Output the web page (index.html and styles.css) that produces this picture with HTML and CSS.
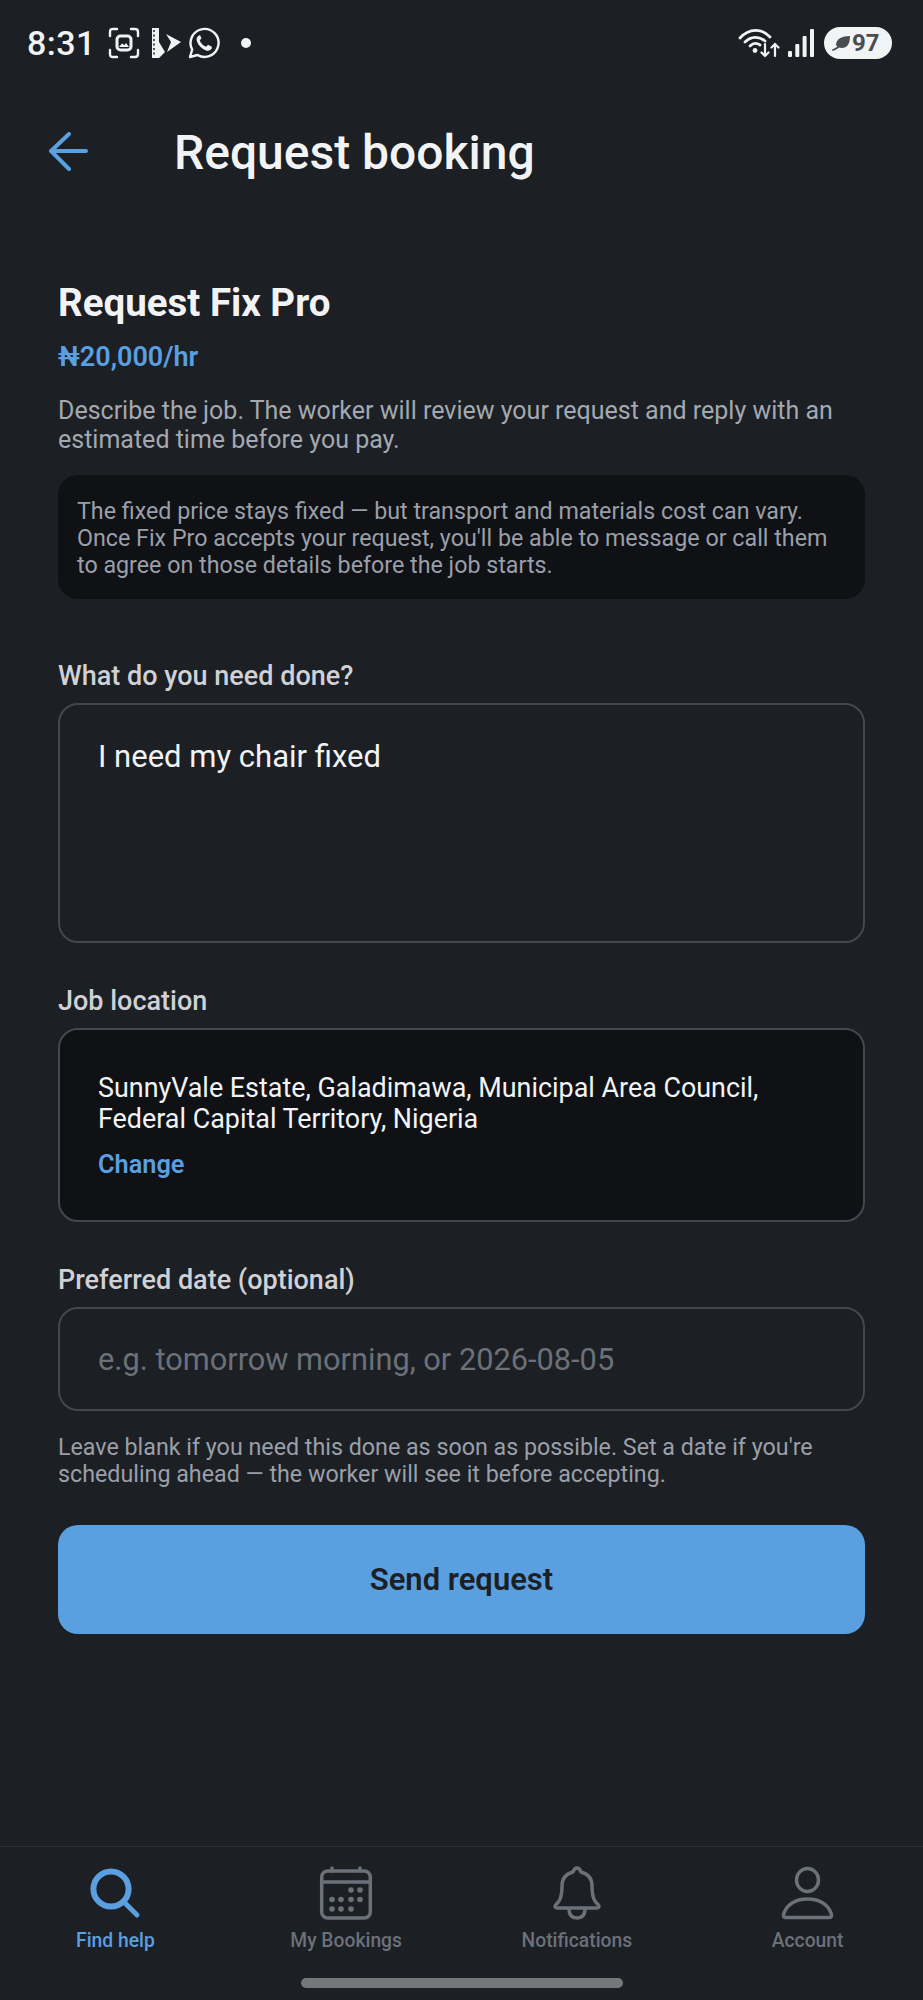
FILE: index.html
```html
<!doctype html>
<html lang="en">
<head>
	<meta charset="utf-8">
	<meta name="viewport" content="width=device-width, initial-scale=1.0">
	<title>Request booking</title>
	<link rel="stylesheet" href="styles.css">
</head>
<body>
<div class="screen">

	<div class="statusbar">
		<div class="status-left">
			<span class="clock">8:31</span>
			<svg class="st-shot" width="32" height="32" viewBox="0 0 32 32" fill="none" stroke="#f2f3f5" stroke-width="2.400" stroke-linecap="round">
				<path d="M2 9V5q0-3 3-3h4M23 2h4q3 0 3 3v4M30 23v4q0 3-3 3h-4M9 30H5q-3 0-3-3v-4"/>
				<rect x="9" y="9" width="14" height="14" rx="3.500" stroke-width="3"/>
				<path d="M11 20l3-3.500 2.500 1.500 1.500-2 3 4z" fill="#f2f3f5" stroke="none"/>
			</svg>
			<svg class="st-app" width="30" height="32" viewBox="0 0 30 32">
				<path d="M1 1h7v14l6 10-6 6H1z" fill="#f2f3f5"/>
				<path d="M3 3v26" stroke="#1c1f24" stroke-width="1.500" stroke-dasharray="2 2.500"/>
				<path d="M15 7l15 8-14 10 4-10z" fill="#f2f3f5"/>
			</svg>
			<svg class="st-wa" width="32" height="32" viewBox="0 0 32 32" fill="none">
				<path d="M2 30l2.200-7.500A14 14 0 1 1 9.500 28z" stroke="#f2f3f5" stroke-width="2.400" stroke-linejoin="round"/>
				<path d="M11 8.500c-2 1-3 3-2 6 1.500 4 5 7.500 9 9 3 .8 5-.5 6-2.500l-.5-1.500-3.500-1.700-1.800 2c-3-1-5.500-3.500-6.500-6.500l1.800-1.800-1.500-3.500z" fill="#f2f3f5"/>
			</svg>
			<span class="st-dot"></span>
		</div>
		<div class="status-right">
			<svg class="st-wifi" width="42" height="30" viewBox="0 0 42 30" fill="none" stroke="#f2f3f5" stroke-width="2.800" stroke-linecap="round">
				<path d="M2 10C11 0 24 0 32 9"/>
				<path d="M7 14c6-6 14-6 20-1"/>
				<path d="M12 18c3-3 7-3 10-1"/>
				<circle cx="17" cy="22.500" r="2.400" fill="#f2f3f5" stroke="none"/>
				<path d="M27 16v12M23.500 24.500l3.500 3.500 3.500-3.500M37 28V16M33.500 19.500l3.500-3.500 3.500 3.500" stroke-width="2.200"/>
			</svg>
			<svg class="st-signal" width="26" height="28" viewBox="0 0 26 28" fill="#f2f3f5">
				<rect x="0" y="22" width="4" height="6" rx="1"/>
				<rect x="7.300" y="15" width="4" height="13" rx="1"/>
				<rect x="14.600" y="7" width="4" height="21" rx="1"/>
				<rect x="22" y="0" width="4" height="28" rx="1"/>
			</svg>
			<span class="battery">
				<svg width="18" height="15" viewBox="0 0 18 15" fill="#4a4c50">
					<path d="M4 9C4 3 10 0 18 0c0 8-3 12-8 12-2.500 0-5-1-6-3z"/>
					<path d="M1 14c3-1 6-3 8-6" stroke="#4a4c50" stroke-width="1.800" fill="none" stroke-linecap="round"/>
				</svg>
				<b>97</b>
			</span>
		</div>
	</div>

	<header class="topbar">
		<svg class="back" width="40" height="40" viewBox="0 0 40 40" fill="none" stroke="#5a9fe0" stroke-width="4" stroke-linecap="round" stroke-linejoin="round">
			<path d="M38 19H3M21 2L3 19l18 18"/>
		</svg>
		<h1>Request booking</h1>
	</header>

	<main class="content">
		<h2>Request Fix Pro</h2>
		<p class="price">₦20,000/hr</p>
		<p class="intro">Describe the job. The worker will review your request and reply with an estimated time before you pay.</p>

		<div class="note">The fixed price stays fixed — but transport and materials cost can vary. Once Fix Pro accepts your request, you'll be able to message or call them to agree on those details before the job starts.</div>

		<label class="label label-first">What do you need done?</label>
		<div class="field field-area">I need my chair fixed</div>

		<label class="label">Job location</label>
		<div class="field field-location">
			<p class="address">SunnyVale Estate, Galadimawa, Municipal Area Council, Federal Capital Territory, Nigeria</p>
			<span class="change">Change</span>
		</div>

		<label class="label">Preferred date (optional)</label>
		<div class="field field-date">e.g. tomorrow morning, or 2026-08-05</div>
		<p class="hint">Leave blank if you need this done as soon as possible. Set a date if you're scheduling ahead — the worker will see it before accepting.</p>

		<button class="send">Send request</button>
	</main>

	<nav class="tabbar">
		<div class="tab tab-on">
			<svg width="56" height="56" viewBox="0 0 56 56" fill="none" stroke="#5a9fe0" stroke-width="6" stroke-linecap="round">
				<circle cx="24" cy="23" r="17.600"/>
				<path d="M37 36l13 13" stroke-width="5"/>
			</svg>
			<span>Find help</span>
		</div>
		<div class="tab">
			<svg width="56" height="56" viewBox="0 0 56 56" fill="none" stroke="#6b7079" stroke-width="3.500" stroke-linecap="round">
				<rect x="3.700" y="5" width="48.600" height="47" rx="6"/>
				<path d="M3.700 16h48.600M14 2v3M42 2v3"/>
				<g fill="#6b7079" stroke="none">
					<circle cx="33" cy="24" r="2.800"/><circle cx="42" cy="24" r="2.800"/>
					<circle cx="14" cy="33.500" r="2.800"/><circle cx="23" cy="33.500" r="2.800"/><circle cx="33" cy="33.500" r="2.800"/><circle cx="42" cy="33.500" r="2.800"/>
					<circle cx="14" cy="43" r="2.800"/><circle cx="23" cy="43" r="2.800"/><circle cx="33" cy="43" r="2.800"/>
				</g>
			</svg>
			<span>My Bookings</span>
		</div>
		<div class="tab">
			<svg width="56" height="56" viewBox="0 0 56 56" fill="none" stroke="#6b7079" stroke-width="3.500" stroke-linecap="round" stroke-linejoin="round">
				<path d="M28 2c-2 0-3 1-4 4-8 2-11 8-11 14 0 8-1 12-3 15-2 3-4 4-4 5 0 2 1 2 3 2h38c2 0 3 0 3-2 0-1-2-2-4-5-2-3-3-7-3-15 0-6-3-12-11-14-1-3-2-4-4-4z"/>
				<path d="M20 43c0 6 3 9 8 9s8-3 8-9"/>
			</svg>
			<span>Notifications</span>
		</div>
		<div class="tab">
			<svg width="56" height="56" viewBox="0 0 56 56" fill="none" stroke="#6b7079" stroke-width="3.500" stroke-linecap="round" stroke-linejoin="round">
				<ellipse cx="27.500" cy="14" rx="11" ry="11.500"/>
				<path d="M6 51.500c-2 0-3-1-2.500-3C6 39 15 33 27.500 33S49 39 51.500 48.500c.5 2-.5 3-2.500 3z"/>
			</svg>
			<span>Account</span>
		</div>
	</nav>

	<div class="handle-row"><div class="handle"></div></div>
</div>
</body>
</html>
```

FILE: styles.css
```css
* {
	box-sizing: border-box;
}

body {
	margin: 0;
	background: #1c1f24;
	font-family: Roboto, "Noto Sans", sans-serif;
	color: #f2f3f5;
}

p, h1, h2 {
	margin: 0;
}

.screen {
	height: 2000px;
	display: flex;
	flex-direction: column;
}

/* status bar */
.statusbar {
	height: 86px;
	padding: 0 31px 0 27px;
	display: flex;
	justify-content: space-between;
	align-items: center;
}
.status-left, .status-right {
	display: flex;
	align-items: center;
}
.clock {
	font-size: 34px;
	font-weight: 500;
	letter-spacing: .5px;
	margin-right: 12px;
}
.st-app {
	margin-left: 11px;
}
.st-wa {
	margin-left: 7px;
}
.st-dot {
	width: 10px;
	height: 10px;
	border-radius: 50%;
	background: #f2f3f5;
	margin-left: 21px;
}
.st-signal {
	margin-left: 8px;
}
.battery {
	margin-left: 10px;
	width: 68px;
	height: 32px;
	padding-left: 8px;
	border-radius: 16px;
	background: #f2f3f5;
	color: #4a4c50;
	display: flex;
	align-items: center;
	gap: 2px;
	font-size: 24px;
}
.battery b {
	font-weight: 700;
}

/* top bar */
.topbar {
	height: 132px;
	padding-left: 48px;
	display: flex;
	align-items: center;
}
.topbar h1 {
	margin-left: 86px;
	font-size: 48px;
	font-weight: 500;
}

/* form */
.content {
	flex: 1;
	padding: 62px 58px 0;
}
h2 {
	font-size: 38.500px;
	font-weight: 700;
	line-height: 46px;
}
.price {
	margin-top: 15px;
	font-size: 27px;
	font-weight: 600;
	line-height: 32px;
	color: #5a9fe0;
}
.intro {
	margin-top: 23px;
	font-size: 25px;
	line-height: 29px;
	color: #a3a8b1;
}
.note {
	margin-top: 21px;
	padding: 23px 24px 20px 19px;
	background: #0f1115;
	border-radius: 20px;
	font-size: 23.250px;
	line-height: 27px;
	color: #9a9fa9;
}
.label {
	display: block;
	margin-top: 42px;
	font-size: 27px;
	font-weight: 500;
	line-height: 32px;
	color: #cfd1d6;
}
.label-first {
	margin-top: 61px;
}
.field {
	margin-top: 11px;
	padding: 0 38px;
	border: 2.500px solid #43474e;
	border-radius: 20px;
	font-size: 31px;
}
.field-area {
	height: 240px;
	padding-top: 33px;
	line-height: 38px;
}
.field-location {
	height: 194px;
	padding-top: 43px;
	background: #0f1115;
}
.address {
	font-size: 26.900px;
	line-height: 31px;
}
.change {
	display: block;
	margin-top: 15px;
	font-size: 25.300px;
	font-weight: 600;
	line-height: 30px;
	color: #5a9fe0;
}
.field-date {
	height: 104px;
	display: flex;
	align-items: center;
	font-size: 30.750px;
	color: #6b7079;
}
.hint {
	margin-top: 23px;
	font-size: 23.250px;
	line-height: 27px;
	color: #9a9fa9;
}
.send {
	display: block;
	width: 100%;
	height: 109px;
	margin-top: 37px;
	border: 0;
	border-radius: 20px;
	background: #5a9fe0;
	color: #1c1f24;
	font-family: inherit;
	font-size: 31px;
	font-weight: 600;
}

/* bottom nav */
.tabbar {
	height: 121px;
	padding: 19px 0 0;
	border-top: 1px solid #2e3137;
	display: grid;
	grid-template-columns: repeat(4, 1fr);
}
.tab {
	display: flex;
	flex-direction: column;
	align-items: center;
	gap: 7px;
	font-size: 19.300px;
	font-weight: 500;
	color: #6b7079;
}
.tab-on {
	color: #5a9fe0;
}
.handle-row {
	height: 33px;
	padding-top: 11px;
}
.handle {
	width: 322px;
	height: 10px;
	margin: 0 auto;
	border-radius: 5px;
	background: #75777b;
}
```
